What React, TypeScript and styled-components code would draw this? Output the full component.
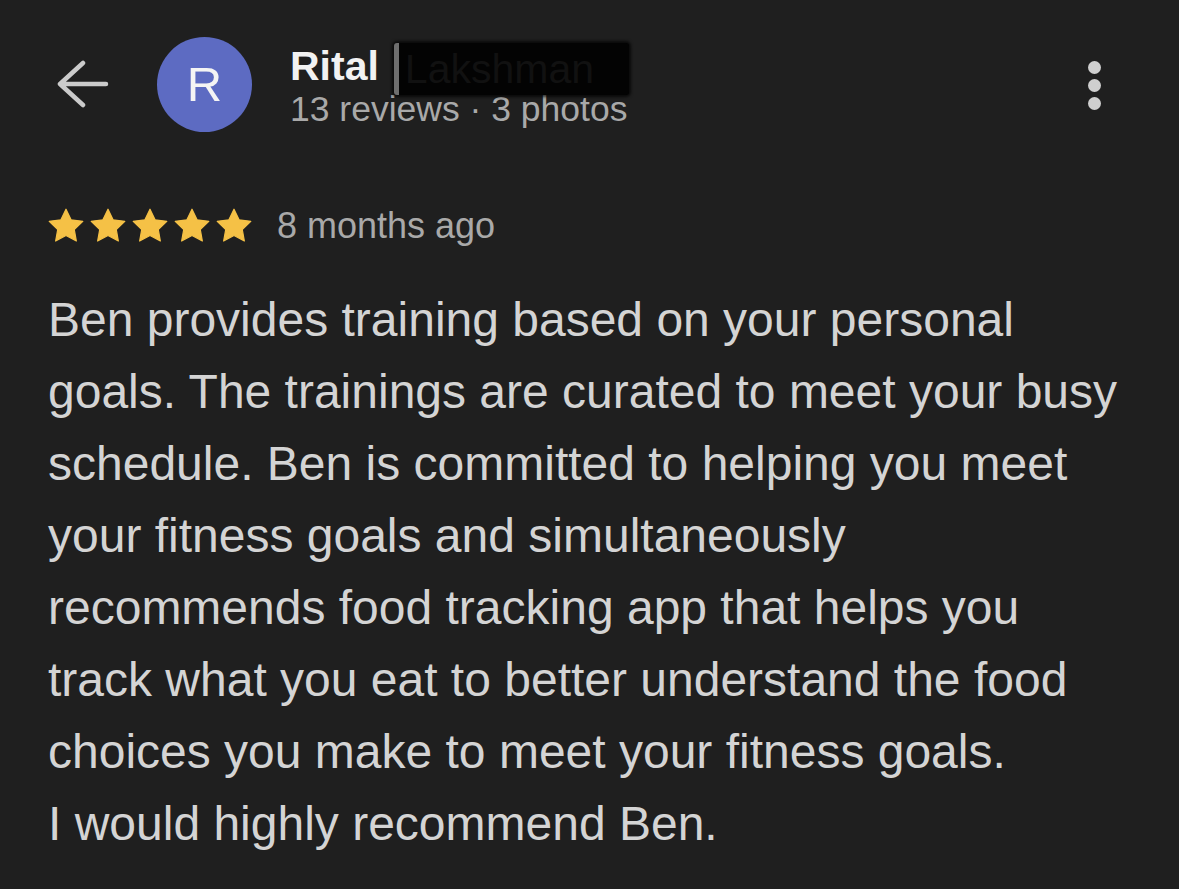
import React from "react";
import styled, { createGlobalStyle } from "styled-components";

const Global = createGlobalStyle`
  html, body { margin: 0; padding: 0; background: #1f1f1f; }
  body { font-family: "Liberation Sans", Arial, sans-serif; }
`;

const Page = styled.div`
  width: 1179px;
  height: 889px;
  background: #1f1f1f;
  box-sizing: border-box;
  padding: 36px 0 0 48px;
  overflow: hidden;
`;

const Header = styled.div`
  display: flex;
  align-items: center;
  height: 96px;
  padding-right: 78px;
`;

const BackButton = styled.div`
  width: 70px;
  display: flex;
  align-items: center;
  padding-left: 8px;
  box-sizing: border-box;
`;

const Avatar = styled.div`
  width: 95px;
  height: 95px;
  border-radius: 50%;
  background: #5d6bc2;
  color: #f4f4f4;
  font-size: 49px;
  display: flex;
  align-items: center;
  justify-content: center;
  margin-left: 39px;
  flex-shrink: 0;
`;

const Who = styled.div`
  display: flex;
  flex-direction: column;
  margin-left: 38px;
  flex: 1;
  margin-top: 4px;
`;

const Name = styled.div`
  font-size: 41px;
  font-weight: 700;
  color: #f2f2f2;
  line-height: 46px;
  height: 46px;
  display: flex;
  align-items: center;
  position: relative;
  z-index: 1;
`;

const Redacted = styled.span`
  display: inline-block;
  margin-left: 15px;
  background: #030303;
  color: #111111;
  font-weight: 400;
  width: 235px;
  box-sizing: border-box;
  padding-left: 6px;
  height: 52px;
  line-height: 52px;
  margin-top: 6px;
  border-radius: 3px;
  box-shadow: 0 0 3px 2px rgba(0, 0, 0, 0.7);
  border-left: 5px solid #6e6e6e;
`;

const Meta = styled.div`
  font-size: 35.5px;
  color: #a9a9a9;
  line-height: 40px;
`;

const Menu = styled.div`
  display: flex;
  flex-direction: column;
  gap: 5px;
  margin-top: 2px;
`;

const Dot = styled.span`
  width: 13px;
  height: 13px;
  border-radius: 50%;
  background: #cfcfcf;
`;

const RatingRow = styled.div`
  display: flex;
  align-items: center;
  margin-top: 74px;
  height: 40px;
`;

const Stars = styled.div`
  display: flex;
  gap: 6px;
  margin-right: 25px;
`;

const Ago = styled.span`
  font-size: 36px;
  color: #a9a9a9;
`;

const Body = styled.p`
  margin: 38px 0 0 0;
  font-size: 48px;
  line-height: 72px;
  color: #d4d4d4;
  width: 1080px;
`;

const Star = () => (
  <svg width="36" height="36" viewBox="0 0 24 24">
    <path
      d="M12 .8l3.4 7.1 7.8 1-5.7 5.4 1.4 7.7L12 18.3l-6.9 3.7 1.4-7.7L.8 8.9l7.8-1z"
      fill="#f5c146"
      stroke="#f5c146"
      strokeWidth="0.8"
      strokeLinejoin="round"
    />
  </svg>
);

export default function App() {
  return (
    <Page>
      <Global />
      <Header>
        <BackButton>
          <svg width="54" height="48" viewBox="0 0 54 48" fill="none" stroke="#cbcbcb" strokeWidth="4.5" strokeLinecap="round" strokeLinejoin="round">
            <path d="M50 24H4M27 3L4 24l23 21" />
          </svg>
        </BackButton>
        <Avatar>R</Avatar>
        <Who>
          <Name>
            Rital<Redacted>Lakshman</Redacted>
          </Name>
          <Meta>13 reviews · 3 photos</Meta>
        </Who>
        <Menu>
          <Dot />
          <Dot />
          <Dot />
        </Menu>
      </Header>
      <RatingRow>
        <Stars>
          {[0, 1, 2, 3, 4].map((i) => (
            <Star key={i} />
          ))}
        </Stars>
        <Ago>8 months ago</Ago>
      </RatingRow>
      <Body>
        Ben provides training based on your personal goals. The trainings are curated to meet your busy schedule. Ben is committed to helping you meet your fitness goals and simultaneously recommends food tracking app that helps you track what you eat to better understand the food choices you make to meet your fitness goals.
        <br />
        I would highly recommend Ben.
      </Body>
    </Page>
  );
}
